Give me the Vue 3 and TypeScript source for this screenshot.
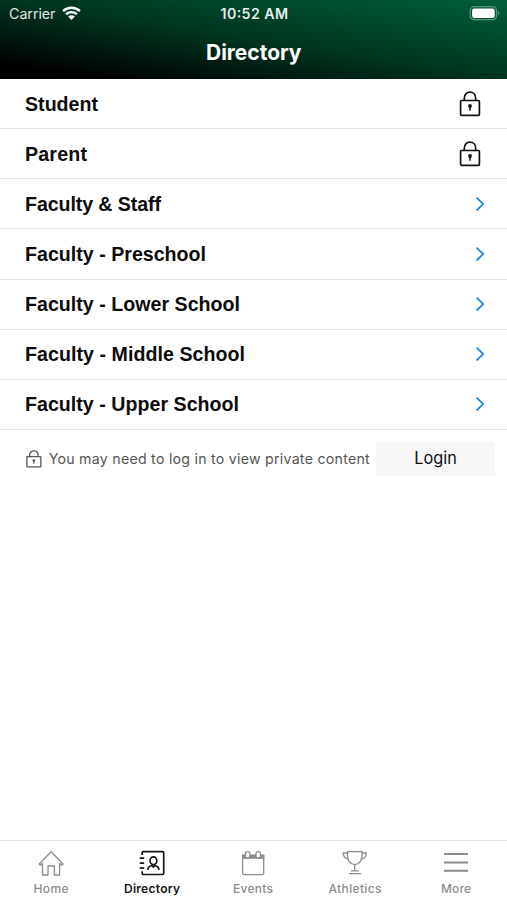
<script setup lang="ts">
interface Row {
  label: string
  locked: boolean
  width: number
}

interface Tab {
  id: string
  label: string
  width: number
}

const rows: Row[] = [
  { label: 'Student', locked: true, width: 73 },
  { label: 'Parent', locked: true, width: 62 },
  { label: 'Faculty & Staff', locked: false, width: 136 },
  { label: 'Faculty - Preschool', locked: false, width: 181 },
  { label: 'Faculty - Lower School', locked: false, width: 215 },
  { label: 'Faculty - Middle School', locked: false, width: 220 },
  { label: 'Faculty - Upper School', locked: false, width: 214 },
]

const tabs: Tab[] = [
  { id: 'home', label: 'Home', width: 35 },
  { id: 'directory', label: 'Directory', width: 56 },
  { id: 'events', label: 'Events', width: 40 },
  { id: 'athletics', label: 'Athletics', width: 53 },
  { id: 'more', label: 'More', width: 30 },
]

const activeTab = 'directory'
</script>

<template>
  <div class="screen">
    <header class="header">
      <div class="status">
        <div class="carrier">
          <svg class="carrier-name" width="47" height="18"><text x="0" y="14" textLength="46.5">Carrier</text></svg>
          <svg class="wifi" width="19" height="15" viewBox="0 0 19 15">
            <path d="M1.1 5.2C5.9.7 13.1.7 17.9 5.2M4.1 8.3c3.2-2.9 7.6-2.9 10.8 0" fill="none" stroke="#fff" stroke-width="2.5" />
            <path d="M6.1 10.5c2-1.8 4.8-1.8 6.8 0L9.5 14z" fill="#fff" />
          </svg>
        </div>
        <svg class="time" width="70" height="18"><text x=".5" y="14" textLength="67.5">10:52 AM</text></svg>
        <svg class="battery" width="31" height="15" viewBox="0 0 31 15">
          <rect x="1.2" y=".7" width="26.4" height="13" rx="4" fill="none" stroke="#5d927b" stroke-width="1.2" />
          <rect x="3.1" y="2.5" width="22.6" height="9.4" rx="2.2" fill="#fff" />
          <path d="M29 5.2c1.8.7 1.8 3.3 0 4z" fill="#5d927b" />
        </svg>
      </div>
      <h1 class="title"><svg width="98" height="30"><text x="1" y="22.5" textLength="95.5" lengthAdjust="spacingAndGlyphs">Directory</text></svg></h1>
    </header>

    <main class="content">
      <ul class="list">
        <li v-for="row in rows" :key="row.label" class="row">
          <svg class="row-label" width="230" height="30"><text x="0" y="22" :textLength="row.width">{{ row.label }}</text></svg>
          <svg v-if="row.locked" class="row-lock" width="22" height="26" viewBox="0 0 22 26">
            <g fill="none" stroke="#111" stroke-width="1.7">
              <rect x="1.6" y="9.5" width="18.8" height="14.8" rx="1" />
              <path d="M5.3 9.5V7.2C5.3 3.7 7.7 1.2 11 1.2s5.7 2.5 5.7 6v2.3" />
            </g>
            <circle cx="11" cy="15" r="1.9" fill="#111" />
            <path d="M10.25 15.5h1.5v4.2h-1.5z" fill="#111" />
          </svg>
          <svg v-else class="chevron" width="10" height="16" viewBox="0 0 10 16">
            <path d="M1.6 1.7 8.2 8.1l-6.6 6.4" fill="none" stroke="#2585e8" stroke-width="1.8" />
          </svg>
        </li>
      </ul>
      <div class="notice">
        <svg class="notice-lock" width="16" height="18" viewBox="0 0 22 26" preserveAspectRatio="none">
          <g fill="none" stroke="#555" stroke-width="1.8">
            <rect x="1.2" y="9.5" width="19.3" height="15" rx="1" />
            <path d="M5 9.5V7.2C5 3.7 7.5 1.2 10.75 1.2s5.75 2.5 5.75 6v2.3" />
          </g>
          <circle cx="10.75" cy="15.2" r="1.8" fill="#555" />
          <path d="M10 16h1.5v3.8H10z" fill="#555" />
        </svg>
        <svg class="notice-text" width="327" height="24"><text x="-.3" y="16.6" textLength="321">You may need to log in to view private content</text></svg>
        <button class="login" type="button"><svg width="46" height="24"><text x="1.3" y="17.3" textLength="42.5" lengthAdjust="spacingAndGlyphs">Login</text></svg></button>
      </div>
    </main>

    <nav class="tabs">
      <a v-for="tab in tabs" :key="tab.id" class="tab" :class="{ active: tab.id === activeTab }">
        <svg class="icon" width="28" height="28" viewBox="0 0 28 28" fill="none" stroke="currentColor" stroke-width="1.3">
          <path v-if="tab.id === 'home'" d="M2.2 15 14.2 2.7 26 15l-1 1.1-2.4-1.6V26h-5.2v-9H11v9H5.5V14.5l-2.3 1.6z" stroke-linejoin="round" />
          <template v-else-if="tab.id === 'directory'">
            <path d="M4.2 6V3.8c0-.7.4-1.1 1.1-1.1h19.2c.8 0 1.2.4 1.2 1.2v20.4c0 .8-.4 1.2-1.2 1.2H5.3c-.7 0-1.1-.4-1.1-1.1v-2.2M1.7 9.2h4.5M1.7 14.2h4.5M1.7 19.2h4.5" stroke-width="1.7" />
            <ellipse cx="15.4" cy="11.8" rx="3.4" ry="3.9" stroke-width="1.7" />
            <path d="M9.8 20.9c.2-2.6 1.8-3.9 4-4.4l1.6 1.3 1.6-1.3c2.2.5 3.8 1.8 4 4.4" stroke-width="1.7" />
          </template>
          <template v-else-if="tab.id === 'events'">
            <path d="M3.6 6.3h21.1v17.9c0 .9-.5 1.4-1.4 1.4H5c-.9 0-1.4-.5-1.4-1.4z" />
            <path d="M3 5.6h22.3v4.2H3z" fill="currentColor" stroke="none" />
            <rect x="6.5" y="2.6" width="4.4" height="6.4" rx="2.1" fill="#fff" />
            <rect x="17" y="2.6" width="4.4" height="6.4" rx="2.1" fill="#fff" />
          </template>
          <template v-else-if="tab.id === 'athletics'">
            <path d="M6.5 2.6H21v3.6c0 5.3-2.8 8.9-7.2 9.5-4.5-.6-7.3-4.2-7.3-9.5z" />
            <path d="M6.5 4H2.2c.1 3.5 2 5.6 5.7 6.2M21 4h4.3c-.1 3.5-2 5.6-5.7 6.2M13.7 15.7v6.5M10 21.8h7.5M8 24.7h12" />
          </template>
          <path v-else d="M2 5h24M2 13.4h24M2 21.8h24" stroke-width="2" />
        </svg>
        <svg class="tab-label" width="60" height="17"><text x="30" y="12.6" text-anchor="middle" :textLength="tab.width">{{ tab.label }}</text></svg>
      </a>
    </nav>
  </div>
</template>

<style>
body {
  background: #fff;
}
</style>

<style scoped>
.screen {
  display: flex;
  flex-direction: column;
  box-sizing: border-box;
  width: 100%;
  height: 100vh;
  overflow: hidden;
  background: #fff;
  color: #0b0b0b;
  font-family: Inter, 'Liberation Sans', sans-serif;
}

svg {
  display: block;
  flex: none;
}

text {
  fill: currentColor;
}

.header {
  flex: none;
  box-sizing: border-box;
  height: 79px;
  color: #fff;
  background: linear-gradient(to top right, #000 9%, #00351f 50%, #005f3c 100%);
}

.status {
  display: grid;
  grid-template-columns: 1fr 70px 1fr;
  align-items: center;
  height: 27px;
  padding: 0 7px 0 9px;
}

.carrier {
  display: flex;
  align-items: center;
  gap: 6px;
  color: #dce5e0;
  font-size: 14.3px;
}

.wifi {
  margin-bottom: 1px;
}

.time {
  font-size: 14.2px;
  font-weight: 600;
  color: #e5eee9;
}

.battery {
  justify-self: end;
  margin-bottom: 1px;
}

.title {
  display: flex;
  justify-content: center;
  margin: 10px 0 0;
  font-size: 21.6px;
  font-weight: 700;
}

.content {
  flex: 1;
}

.list {
  list-style: none;
  margin: 0;
  padding: 0;
}

.row {
  display: flex;
  align-items: center;
  justify-content: space-between;
  box-sizing: border-box;
  height: 50.14px;
  padding: 0 22px 0 25px;
  border-bottom: 1px solid #e2e2e2;
}

.row-label {
  font-family: 'Liberation Sans', Arial, sans-serif;
  font-size: 19.6px;
  font-weight: 700;
}

.row-lock {
  margin-right: 4px;
}

.notice {
  display: flex;
  align-items: center;
  height: 34px;
  padding: 12px 12px 0 26px;
  color: #555;
}

.notice-text {
  margin-left: 7px;
  font-size: 14.2px;
}

.login {
  display: flex;
  flex: 1;
  align-items: center;
  justify-content: center;
  height: 34px;
  padding: 0;
  border: 0;
  background: #f7f7f7;
  color: #111;
  font-family: inherit;
  font-size: 16.8px;
}

.tabs {
  display: grid;
  grid-template-columns: repeat(5, 1fr);
  flex: none;
  box-sizing: border-box;
  height: 60px;
  padding-top: 8px;
  border-top: 1px solid #e2e2e2;
}

.tab {
  display: flex;
  flex-direction: column;
  align-items: center;
  gap: 3px;
  color: #8c8c8c;
  font-size: 12px;
  font-weight: 500;
}

.tab.active {
  color: #151515;
  font-weight: 600;
}
</style>
